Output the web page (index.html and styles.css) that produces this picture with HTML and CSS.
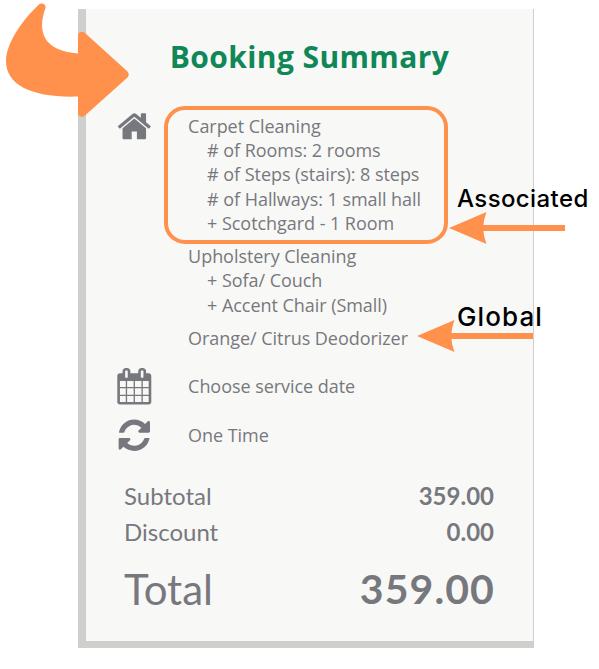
FILE: index.html
```html
<!DOCTYPE html>
<html lang="en">
<head>
    <meta charset="UTF-8">
    <meta name="viewport" content="width=device-width, initial-scale=1.0">
    <title>Booking Summary</title>
    <link rel="stylesheet" href="styles.css">
</head>
<body>
    <div class="summary">
        <h1>Booking Summary</h1>
        <div class="row services">
            <svg class="icon" viewBox="0 0 1792 1792"><path d="M1472 992v480q0 26-19 45t-45 19h-384v-384h-256v384h-384q-26 0-45-19t-19-45v-480q0-1 .5-3t.5-3l575-474 575 474q1 2 1 6zm223-69l-62 74q-8 9-21 11h-3q-13 0-21-7l-692-577-692 577q-12 8-24 7-13-2-21-11l-62-74q-8-10-7-23.5t11-21.5l719-599q32-26 76-26t76 26l244 204v-195q0-14 9-23t23-9h192q14 0 23 9t9 23v408l219 182q10 8 11 21.5t-7 23.5z"/></svg>
            <div class="list">
                <div class="group">
                    <p>Carpet Cleaning</p>
                    <p class="sub"># of Rooms: 2 rooms</p>
                    <p class="sub"># of Steps (stairs): 8 steps</p>
                    <p class="sub"># of Hallways: 1 small hall</p>
                    <p class="sub">+ Scotchgard - 1 Room</p>
                </div>
                <div class="group">
                    <p>Upholstery Cleaning</p>
                    <p class="sub">+ Sofa/ Couch</p>
                    <p class="sub">+ Accent Chair (Small)</p>
                </div>
                <div class="group">
                    <p>Orange/ Citrus Deodorizer</p>
                </div>
            </div>
        </div>
        <div class="row date">
            <svg class="icon" viewBox="0 0 1792 1792"><path d="M192 1664h288v-288h-288v288zm352 0h320v-288h-320v288zm-352-352h288v-320h-288v320zm352 0h320v-320h-320v320zm-352-384h288v-288h-288v288zm736 736h320v-288h-320v288zm-384-736h320v-288h-320v288zm768 736h288v-288h-288v288zm-384-352h320v-320h-320v320zm-352-864v-288q0-13-9.5-22.5t-22.5-9.5h-64q-13 0-22.5 9.5t-9.5 22.5v288q0 13 9.5 22.5t22.5 9.5h64q13 0 22.5-9.5t9.5-22.5zm736 864h288v-320h-288v320zm-384-384h320v-288h-320v288zm384 0h288v-288h-288v288zm32-480v-288q0-13-9.5-22.5t-22.5-9.5h-64q-13 0-22.5 9.5t-9.5 22.5v288q0 13 9.5 22.5t22.5 9.5h64q13 0 22.5-9.5t9.5-22.5zm384-64v1280q0 52-38 90t-90 38h-1408q-52 0-90-38t-38-90v-1280q0-52 38-90t90-38h128v-96q0-66 47-113t113-47h64q66 0 113 47t47 113v96h384v-96q0-66 47-113t113-47h64q66 0 113 47t47 113v96h128q52 0 90 38t38 90z"/></svg>
            <p>Choose service date</p>
        </div>
        <div class="row">
            <svg class="icon" viewBox="0 0 1792 1792"><path d="M1639 1056q0 5-1 7-64 268-268 434.5t-478 166.5q-146 0-282.5-55t-243.5-157l-129 129q-19 19-45 19t-45-19-19-45v-448q0-26 19-45t45-19h448q26 0 45 19t19 45-19 45l-137 137q71 66 161 102t187 36q134 0 250-65t186-179q11-17 53-117 8-23 30-23h192q13 0 22.5 9.5t9.5 22.5zm25-800v448q0 26-19 45t-45 19h-448q-26 0-45-19t-19-45 19-45l138-138q-148-137-349-137-134 0-250 65t-186 179q-11 17-53 117-8 23-30 23h-199q-13 0-22.5-9.5t-9.5-22.5v-7q65-268 270-434.5t480-166.5q146 0 284 55.5t245 156.5l130-129q19-19 45-19t45 19 19 45z"/></svg>
            <p>One Time</p>
        </div>
        <div class="totals">
            <div class="line"><span>Subtotal</span><b>359.00</b></div>
            <div class="line"><span>Discount</span><b>0.00</b></div>
            <div class="line total"><span>Total</span><b>359.00</b></div>
        </div>
    </div>

    <!-- notes drawn over the summary -->
    <svg class="marks" width="599" height="669" viewBox="0 0 599 669">
        <path d="M39.500 4 C42 2.300 46.500 4.500 45.500 8 C37 31 43 51 78 53.500 V35 C78 32 82 30.500 85 33 L127.500 71.500 Q130 74.500 127.500 77.500 L85 115.500 C82 118 78 116.500 78 113.500 V96.500 C34 98 6 86 6 61 C6 45 20 22 39.500 4 Z"/>
        <path d="M449 228 L486.500 212 Q480 228 486.500 244 Z"/>
        <rect x="482" y="225" width="83" height="6"/>
        <path d="M417 336 L454.500 320 Q448 336 454.500 352 Z"/>
        <rect x="450" y="333" width="83" height="6"/>
    </svg>
    <div class="frame"></div>
    <div class="note associated">Associated</div>
    <div class="note global">Global</div>
</body>
</html>
```
FILE: styles.css
```css
body{
    margin: 0;
    background-color: white;
    font-family: "Open Sans", sans-serif;
    color: #77787d;
}
.summary{
    box-sizing: border-box;
    width: 456px;
    height: 639px;
    margin: 9px 0 0 78px;
    border: solid #cfcfcd;
    border-width: 0 1px 7px 8px;
    background-color: #f8f8f7;
    overflow: hidden;
}
h1{
    margin: 27px 0 0;
    text-align: center;
    font-size: 30px;
    line-height: 42px;
    font-weight: 700;
    letter-spacing: 0.4px;
    color: #0f8757;
}
p{
    margin: 0;
    font-size: 18px;
    line-height: 24.3px;
    letter-spacing: -0.05px;
}
.row{
    display: flex;
    align-items: center;
    gap: 36px;
    height: 48.6px;
    padding-left: 29.5px;
}
.services{
    align-items: flex-start;
    height: auto;
    margin-top: 30px;
}
.icon{
    width: 36.6px;
    height: 36.6px;
    flex: none;
    fill: #77787d;
}
.list{
    padding-top: 5.8px;
}
.group{
    margin-bottom: 8.7px;
}
.sub{
    padding-left: 19px;
}
.date{
    margin-top: 3.6px;
}
.totals{
    margin: 19px 39px 0 38px;
    font-family: Lato, sans-serif;
}
.line{
    display: flex;
    justify-content: space-between;
    font-size: 24px;
    line-height: 36px;
}
.total{
    margin-top: 9px;
    font-size: 42px;
    line-height: 60px;
}
.total b{
    font-size: 41px;
    letter-spacing: 1.1px;
    margin-right: -1px;
}
.marks{
    position: absolute;
    left: 0;
    top: 0;
    fill: #ff914d;
}
.frame{
    position: absolute;
    box-sizing: border-box;
    left: 164px;
    top: 106px;
    width: 284px;
    height: 138px;
    border: 4px solid #ff914d;
    border-radius: 21px;
}
.note{
    position: absolute;
    left: 457px;
    font-family: Inter, sans-serif;
    font-size: 24px;
    line-height: 30px;
    font-weight: 500;
    letter-spacing: 0.4px;
    color: black;
}
.associated{
    top: 184px;
}
.global{
    top: 302px;
    font-size: 26px;
    letter-spacing: 1.1px;
}
```
